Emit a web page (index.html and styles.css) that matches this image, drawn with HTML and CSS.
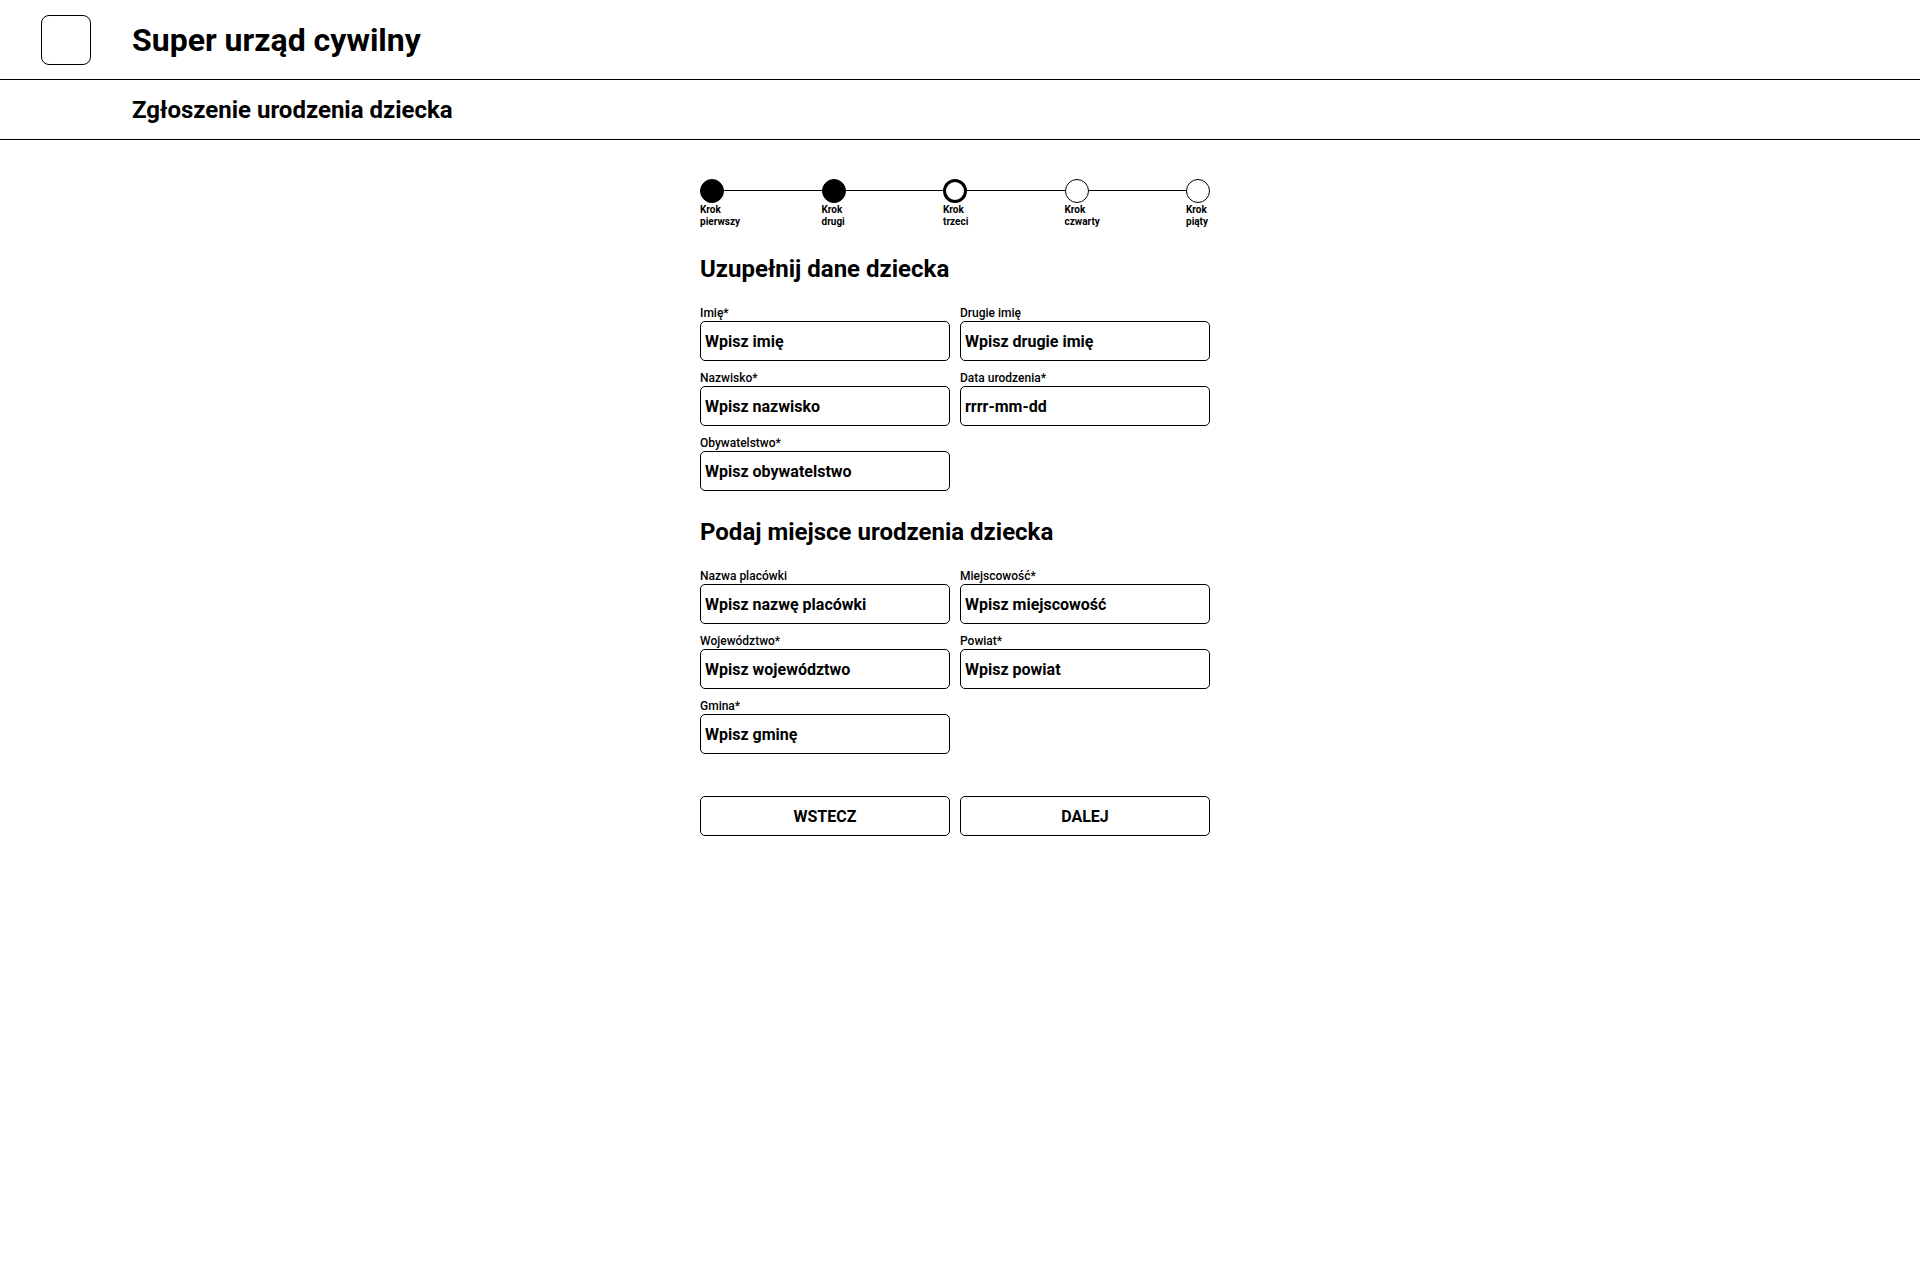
FILE: index.html
```html
<!DOCTYPE html>
<html lang="pl">
<head>
  <meta charset="UTF-8" />
  <title>Super urząd cywilny</title>
  <link rel="stylesheet" href="styles.css">
</head>
<body>
  <header class="top-bar">
    <div class="logo"></div>
    <h1>Super urząd cywilny</h1>
  </header>

  <div class="sub-bar">
    <h2 class="page-title">Zgłoszenie urodzenia dziecka</h2>
  </div>

  <main class="form-wrap">
    <div class="stepper">
      <div class="step done">
        <span class="dot"></span>
        <span class="step-label">Krok<br>pierwszy</span>
      </div>
      <div class="step done">
        <span class="dot"></span>
        <span class="step-label">Krok<br>drugi</span>
      </div>
      <div class="step current">
        <span class="dot"></span>
        <span class="step-label">Krok<br>trzeci</span>
      </div>
      <div class="step">
        <span class="dot"></span>
        <span class="step-label">Krok<br>czwarty</span>
      </div>
      <div class="step">
        <span class="dot"></span>
        <span class="step-label">Krok<br>piąty</span>
      </div>
    </div>

    <h3 class="section-title">Uzupełnij dane dziecka</h3>
    <div class="form-grid">
      <div class="field">
        <label for="imie">Imię*</label>
        <input type="text" id="imie" placeholder="Wpisz imię" />
      </div>
      <div class="field">
        <label for="drugie-imie">Drugie imię</label>
        <input type="text" id="drugie-imie" placeholder="Wpisz drugie imię" />
      </div>
      <div class="field">
        <label for="nazwisko">Nazwisko*</label>
        <input type="text" id="nazwisko" placeholder="Wpisz nazwisko" />
      </div>
      <div class="field">
        <label for="data">Data urodzenia*</label>
        <input type="text" id="data" placeholder="rrrr-mm-dd" />
      </div>
      <div class="field">
        <label for="obywatelstwo">Obywatelstwo*</label>
        <input type="text" id="obywatelstwo" placeholder="Wpisz obywatelstwo" />
      </div>
    </div>

    <h3 class="section-title">Podaj miejsce urodzenia dziecka</h3>
    <div class="form-grid">
      <div class="field">
        <label for="placowka">Nazwa placówki</label>
        <input type="text" id="placowka" placeholder="Wpisz nazwę placówki" />
      </div>
      <div class="field">
        <label for="miejscowosc">Miejscowość*</label>
        <input type="text" id="miejscowosc" placeholder="Wpisz miejscowość" />
      </div>
      <div class="field">
        <label for="wojewodztwo">Województwo*</label>
        <input type="text" id="wojewodztwo" placeholder="Wpisz województwo" />
      </div>
      <div class="field">
        <label for="powiat">Powiat*</label>
        <input type="text" id="powiat" placeholder="Wpisz powiat" />
      </div>
      <div class="field">
        <label for="gmina">Gmina*</label>
        <input type="text" id="gmina" placeholder="Wpisz gminę" />
      </div>
    </div>

    <div class="actions">
      <button class="nav-btn" type="button">WSTECZ</button>
      <button class="nav-btn" type="button">DALEJ</button>
    </div>
  </main>
</body>
</html>
```

FILE: styles.css
```css
* {
  box-sizing: border-box;
}

body {
  margin: 0;
  font-family: Roboto, "Liberation Sans", sans-serif;
  color: #000;
  background: #fff;
}

.top-bar {
  display: flex;
  align-items: center;
  gap: 41px;
  height: 80px;
  padding-left: 41px;
  border-bottom: 1px solid #000;
}

.logo {
  width: 50px;
  height: 50px;
  border: 1px solid #000;
  border-radius: 8px;
}

.top-bar h1 {
  margin: 0;
  font-size: 32px;
  font-weight: 700;
}

.sub-bar {
  display: flex;
  align-items: center;
  height: 60px;
  padding-left: 132px;
  border-bottom: 1px solid #000;
}

.page-title {
  margin: 0;
  font-size: 24px;
  font-weight: 700;
}

.form-wrap {
  width: 520px;
  margin: 0 auto;
  padding-top: 39px;
}

/* Stepper */
.stepper {
  position: relative;
  display: flex;
  justify-content: space-between;
  width: 510px;
}

.stepper::before {
  content: "";
  position: absolute;
  left: 12px;
  right: 12px;
  top: 11px;
  height: 1px;
  background: #000;
}

.step {
  position: relative;
  width: 24px;
}

.dot {
  display: block;
  width: 24px;
  height: 24px;
  border: 1px solid #000;
  border-radius: 50%;
  background: #fff;
}

.step.done .dot {
  background: #000;
}

.step.current .dot {
  border-width: 3px;
}

.step-label {
  display: block;
  margin-top: 1px;
  white-space: nowrap;
  font-size: 10px;
  font-weight: 700;
  line-height: 12px;
}

/* Form */
.section-title {
  margin: 27px 0 23px;
  font-size: 24px;
  font-weight: 700;
  line-height: 28px;
}

.form-grid {
  display: grid;
  grid-template-columns: 250px 250px;
  column-gap: 10px;
  row-gap: 10px;
}

.field label {
  display: block;
  font-size: 12px;
  font-weight: 500;
  line-height: 15px;
}

.field input {
  display: block;
  width: 100%;
  height: 40px;
  padding: 0 4px;
  border: 1px solid #000;
  border-radius: 5px;
  font-family: inherit;
  font-size: 16px;
  font-weight: 700;
  color: #000;
}

.field input::placeholder {
  color: #000;
  opacity: 1;
}

.actions {
  display: grid;
  grid-template-columns: 250px 250px;
  column-gap: 10px;
  margin-top: 42px;
}

.nav-btn {
  height: 40px;
  border: 1px solid #000;
  border-radius: 5px;
  background: #fff;
  font-family: inherit;
  font-size: 16px;
  font-weight: 700;
  color: #000;
  cursor: pointer;
}
```
